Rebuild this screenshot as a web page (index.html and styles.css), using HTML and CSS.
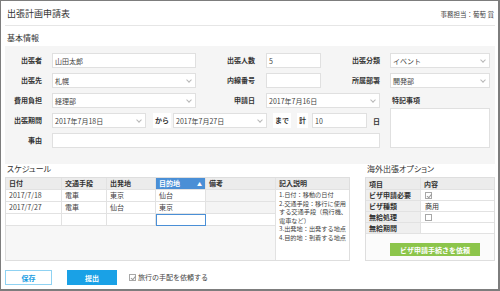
FILE: index.html
```html
<!DOCTYPE html>
<html lang="ja">
<head>
<meta charset="UTF-8">
<title>出張計画申請表</title>
<link rel="stylesheet" href="styles.css">
</head>
<body>
<div class="window">
	<header class="top">
		<h1>出張計画申請表</h1>
		<span class="clerk">事務担当：葡萄 賞</span>
	</header>

	<h2 class="sec-title">基本情報</h2>
	<div class="panel">
		<!-- 1行目 -->
		<label class="lbl">出張者</label>
		<div class="field">山田太郎</div>
		<label class="lbl lbl-c3">出張人数</label>
		<div class="field">5</div>
		<label class="lbl">出張分類</label>
		<div class="field select">イベント</div>

		<!-- 2行目 -->
		<label class="lbl">出張先</label>
		<div class="field select">札幌</div>
		<label class="lbl lbl-c3">内線番号</label>
		<div class="field"></div>
		<label class="lbl">所属部署</label>
		<div class="field select">開発部</div>

		<!-- 3行目 -->
		<label class="lbl">費用負担</label>
		<div class="field select">経理部</div>
		<label class="lbl lbl-c3">申請日</label>
		<div class="field select wide">2017年7月16日</div>
		<div class="notes">
			<span class="notes-lbl">特記事項</span>
			<div class="field area"></div>
		</div>

		<!-- 4行目 -->
		<label class="lbl">出張期間</label>
		<div class="period">
			<div class="field select date">2017年7月18日</div>
			<span class="mini m-from">から</span>
			<div class="field select date d2">2017年7月27日</div>
			<span class="mini m-to">まで</span>
			<span class="mini m-sum">計</span>
			<div class="field days">10</div>
			<span class="unit">日</span>
		</div>

		<!-- 5行目 -->
		<label class="lbl">事由</label>
		<div class="field reason"></div>
	</div>

	<div class="lower">
		<section class="schedule">
			<h3 class="sub-title">スケジュール</h3>
			<div class="sched-grid">
				<div class="th">日付</div>
				<div class="th">交通手段</div>
				<div class="th">出発地</div>
				<div class="th th-sort">目的地<span class="arrow">▲</span></div>
				<div class="th">備考</div>
				<div class="th last">記入説明</div>

				<div class="td">2017/7/18</div>
				<div class="td">電車</div>
				<div class="td">東京</div>
				<div class="td">仙台</div>
				<div class="td dim"></div>
				<div class="help">1.日付：移動の日付<br>2.交通手段：移行に使用<br>する交通手段（飛行機、<br>電車など）<br>3.出発地：出発する地点<br>4.目的地：到着する地点</div>

				<div class="td">2017/7/27</div>
				<div class="td">電車</div>
				<div class="td">仙台</div>
				<div class="td">東京</div>
				<div class="td dim"></div>

				<div class="td"></div>
				<div class="td"></div>
				<div class="td"></div>
				<div class="td editing"></div>
				<div class="td"></div>

				<div class="filler"></div>
			</div>
		</section>

		<section class="overseas">
			<h3 class="sub-title">海外出張オプション</h3>
			<div class="opt-box">
				<div class="opt-grid">
					<div class="oh">項目</div>
					<div class="oh">内容</div>
					<div class="ok">ビザ申請必要</div>
					<div class="ov"><span class="check on"></span></div>
					<div class="ok">ビザ種類</div>
					<div class="ov">商用</div>
					<div class="ok">無給処理</div>
					<div class="ov"><span class="check"></span></div>
					<div class="ok">無給期間</div>
					<div class="ov"></div>
				</div>
				<div class="opt-foot">
					<button class="btn-visa">ビザ申請手続きを依頼</button>
				</div>
			</div>
		</section>
	</div>

	<footer class="actions">
		<button class="btn btn-save">保存</button>
		<button class="btn btn-submit">提出</button>
		<span class="check on"></span>
		<span class="check-lbl">旅行の手配を依頼する</span>
	</footer>
</div>
</body>
</html>
```

FILE: styles.css
```css
* {
	margin: 0;
	padding: 0;
	box-sizing: border-box;
}

html,
body {
	width: 500px;
	height: 291px;
	background: #fff;
}

body {
	font-family: "Noto Sans CJK JP", "Noto Sans", sans-serif;
	font-size: 7px;
	color: #333;
}

.window {
	width: 500px;
	height: 291px;
	border: 1px solid #7d7d7d;
	border-right-width: 2px;
	border-bottom-width: 2px;
	padding: 0 3px 0 4px;
	display: flex;
	flex-direction: column;
}

/* ヘッダー */
.top {
	height: 25px;
	padding: 1px 1px 0 2px;
	border-bottom: 1px solid #e6e6e6;
	display: flex;
	align-items: center;
	justify-content: space-between;
}

.top h1 {
	font-size: 9px;
	font-weight: normal;
	color: #333;
}

.clerk {
	font-size: 6.5px;
	color: #444;
}

.sec-title {
	height: 20px;
	padding: 0 0 3px 2px;
	font-size: 8px;
	line-height: 10px;
	font-weight: normal;
	display: flex;
	align-items: flex-end;
}

/* 基本情報パネル */
.panel {
	height: 118px;
	background: #f5f5f5;
	padding-top: 7px;
	display: grid;
	grid-template-columns: 47px 144px 70px 55px 69px 100px;
	grid-template-rows: repeat(5, 15px);
	row-gap: 5px;
}

.lbl {
	font-weight: bold;
	text-align: right;
	padding-right: 10px;
	line-height: 15px;
	white-space: nowrap;
}

.lbl-c3 {
	padding-right: 11px;
}

.field {
	height: 15px;
	background: #fff;
	border: 1px solid #e0e0e0;
	padding: 0 3px 0 2px;
	display: flex;
	align-items: center;
	justify-content: space-between;
	white-space: nowrap;
	color: #444;
}

.select::after {
	content: "";
	width: 3px;
	height: 3px;
	border-right: 1px solid #b8b8b8;
	border-bottom: 1px solid #b8b8b8;
	transform: rotate(45deg);
	margin: -2px 1px 0 0;
}

.wide {
	grid-column: 4 / 6;
	margin-right: 10px;
}

.notes {
	grid-column: 6;
	grid-row: 3 / 6;
	display: flex;
	flex-direction: column;
}

.notes-lbl {
	font-weight: bold;
	line-height: 15px;
	padding-left: 2px;
}

.area {
	flex: 1;
}

.period {
	grid-column: 2 / 6;
	display: flex;
	align-items: center;
}

.date {
	width: 94px;
}

.d2 {
	margin-left: 2px;
}

.mini {
	background: #fff;
	font-weight: bold;
	line-height: 15px;
	padding: 0 2px;
}

.m-from {
	margin-left: 7px;
}

.m-to {
	margin-left: 6px;
}

.m-sum {
	margin-left: 6px;
}

.days {
	width: 55px;
	margin-left: 4px;
}

.unit {
	flex: 1;
	text-align: right;
	padding-right: 10px;
	font-weight: bold;
}

.reason {
	grid-column: 2 / 6;
	margin-right: 10px;
}

/* 下段 */
.lower {
	height: 97px;
	display: flex;
	gap: 15px;
}

.sub-title {
	height: 13px;
	padding-left: 2px;
	font-size: 8px;
	font-weight: normal;
	line-height: 10px;
	font-feature-settings: "palt";
}

.schedule {
	width: 345px;
	display: flex;
	flex-direction: column;
}

.sched-grid {
	height: 84px;
	border: 1px solid #dedede;
	display: grid;
	grid-template-columns: 56px 45px 49px 50px 70px 73px;
	grid-template-rows: 12px 12px 12px 12px 1fr;
	background: #f7f7f7;
}

.th,
.td {
	border-right: 1px solid #e2e2e2;
	border-bottom: 1px solid #e2e2e2;
	padding-left: 3px;
	line-height: 11px;
	white-space: nowrap;
}

.th {
	background: #ececec;
	font-weight: bold;
}

.th.last {
	border-right: 0;
}

.th-sort {
	background: #4a8fd6;
	color: #fff;
	display: flex;
	justify-content: space-between;
	padding-right: 3px;
}

.arrow {
	font-size: 5px;
}

.td {
	background: #fff;
	color: #444;
}

.td.dim {
	background: #f4f4f4;
}

.td.editing {
	border: 1px solid #4a8fd6;
}

.help {
	grid-column: 6;
	grid-row: 2 / 6;
	background: #fff;
	font-size: 6.2px;
	line-height: 8.6px;
	padding: 1px 0 0 3px;
	white-space: nowrap;
	color: #444;
}

.filler {
	grid-column: 1 / 6;
	grid-row: 5;
	border-right: 1px solid #e2e2e2;
}

.overseas {
	width: 130px;
	display: flex;
	flex-direction: column;
}

.opt-box {
	height: 84px;
	border: 1px solid #dedede;
	display: flex;
	flex-direction: column;
	background: #fbfbfb;
}

.opt-grid {
	display: grid;
	grid-template-columns: 55px 73px;
	grid-template-rows: 12px 11px 11px 11px 11px;
}

.oh,
.ok,
.ov {
	border-bottom: 1px solid #e2e2e2;
	padding-left: 3px;
	line-height: 10px;
	white-space: nowrap;
	display: flex;
	align-items: center;
}

.oh {
	background: #ececec;
	font-weight: bold;
}

.oh:first-child,
.ok {
	border-right: 1px solid #e2e2e2;
}

.ok {
	background: #efefef;
	font-weight: bold;
}

.ov {
	background: #fff;
	padding-left: 4px;
}

.opt-foot {
	padding: 9px 0 0 24px;
}

.btn-visa {
	width: 90px;
	height: 13px;
	border: 0;
	background: #8cc54b;
	color: #fff;
	font: bold 7px "Noto Sans CJK JP", sans-serif;
}

/* チェックボックス */
.check {
	display: inline-block;
	width: 7px;
	height: 7px;
	border: 1px solid #a8a8a8;
	background: #fff;
	position: relative;
}

.check.on::after {
	content: "";
	position: absolute;
	left: 1.5px;
	top: 0;
	width: 2px;
	height: 3.5px;
	border-right: 1px solid #999;
	border-bottom: 1px solid #999;
	transform: rotate(40deg);
}

/* フッター */
.actions {
	padding-top: 9px;
	display: flex;
	align-items: flex-start;
}

.btn {
	height: 15px;
	font: bold 7px "Noto Sans CJK JP", sans-serif;
}

.btn-save {
	width: 47px;
	background: #fff;
	border: 1px solid #8fd2f2;
	color: #1b9de2;
}

.btn-submit {
	width: 50px;
	margin-left: 15px;
	background: #1aa1e6;
	border: 0;
	color: #fff;
}

.actions .check {
	margin: 4px 0 0 12px;
}

.check-lbl {
	margin-left: 2px;
	line-height: 15px;
	color: #444;
}
```
